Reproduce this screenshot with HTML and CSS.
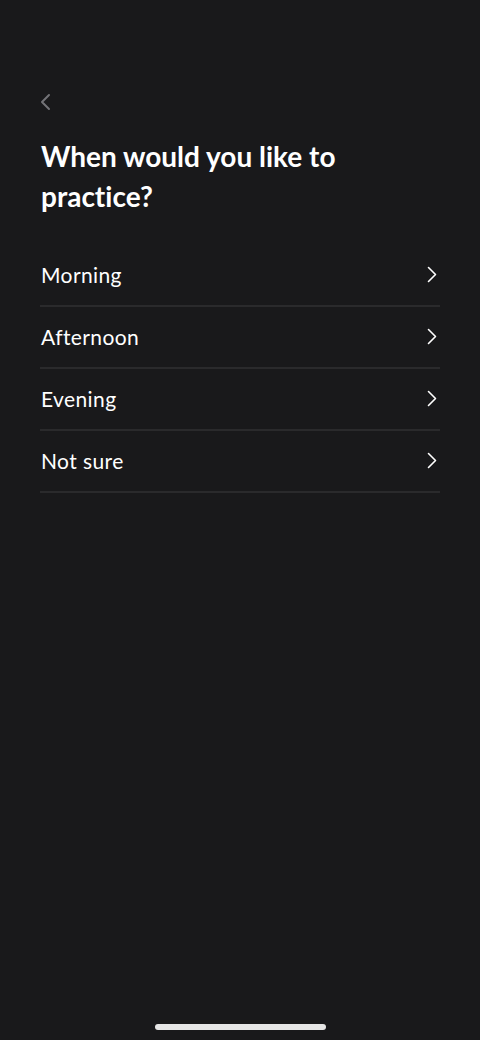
FILE: index.html
```html
<!DOCTYPE html>
<html>
<head>
<meta charset="utf-8">
<link rel="stylesheet" href="styles.css">
</head>
<body>
<div class="screen">
  <div class="topbar">
    <svg class="back" width="12" height="18" viewBox="0 0 12 18"><path d="M10 2 L3 9 L10 16" fill="none" stroke="#737377" stroke-width="2" stroke-linecap="round" stroke-linejoin="round"/></svg>
  </div>
  <h1 class="title">When would you like to practice?</h1>
  <ul class="options">
    <li class="option"><span>Morning</span><svg class="chev" width="10" height="17" viewBox="0 0 10 17"><path d="M1.5 1.5 L8.5 8.5 L1.5 15.5" fill="none" stroke="#fff" stroke-width="1.6" stroke-linecap="round" stroke-linejoin="round"/></svg></li>
    <li class="option"><span>Afternoon</span><svg class="chev" width="10" height="17" viewBox="0 0 10 17"><path d="M1.5 1.5 L8.5 8.5 L1.5 15.5" fill="none" stroke="#fff" stroke-width="1.6" stroke-linecap="round" stroke-linejoin="round"/></svg></li>
    <li class="option"><span>Evening</span><svg class="chev" width="10" height="17" viewBox="0 0 10 17"><path d="M1.5 1.5 L8.5 8.5 L1.5 15.5" fill="none" stroke="#fff" stroke-width="1.6" stroke-linecap="round" stroke-linejoin="round"/></svg></li>
    <li class="option"><span>Not sure</span><svg class="chev" width="10" height="17" viewBox="0 0 10 17"><path d="M1.5 1.5 L8.5 8.5 L1.5 15.5" fill="none" stroke="#fff" stroke-width="1.6" stroke-linecap="round" stroke-linejoin="round"/></svg></li>
  </ul>
  <div class="spacer"></div>
  <div class="home-bar"><div class="home-indicator"></div></div>
</div>
</body>
</html>
```

FILE: styles.css
```css
* { box-sizing: border-box; }
html, body {
  margin: 0;
  padding: 0;
  background: #19191b;
}
body {
  font-family: Lato, "Noto Sans", sans-serif;
  color: #fff;
  font-variant-ligatures: none;
  font-feature-settings: "liga" 0, "dlig" 0, "clig" 0;
}
.screen {
  width: 480px;
  height: 1040px;
  display: flex;
  flex-direction: column;
  padding: 0 40px;
}
.topbar {
  height: 112px;
  padding-top: 93px;
}
.back {
  display: block;
  margin-left: -1px;
}
.title {
  margin: 24px 0 0 0;
  font-size: 28px;
  line-height: 40px;
  font-weight: 700;
  width: 320px;
  padding-left: 1px;
}
.options {
  list-style: none;
  margin: 29px 0 0 0;
  padding: 0;
}
.option {
  height: 62px;
  display: flex;
  align-items: center;
  justify-content: space-between;
  border-bottom: 2px solid #2a2a2c;
  font-size: 21px;
  letter-spacing: 0.4px;
  padding-bottom: 2px;
}
.option span { padding-left: 1px; }
.chev {
  display: block;
  margin-right: 3px;
}
.spacer { flex: 1; }
.home-bar {
  height: 16px;
  display: flex;
  justify-content: center;
}
.home-indicator {
  width: 171px;
  height: 6px;
  border-radius: 3px;
  background: #e6e6e6;
}
```
